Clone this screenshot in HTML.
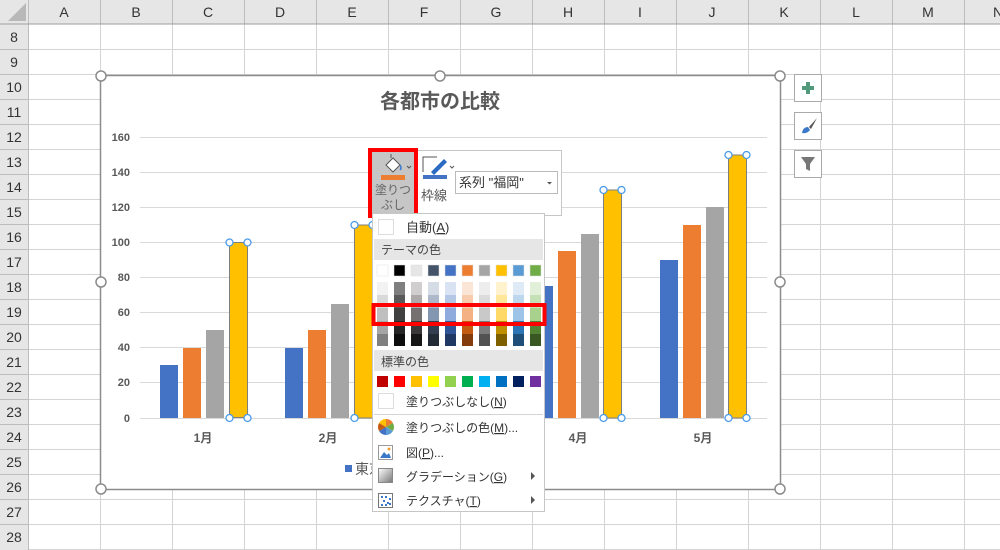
<!DOCTYPE html>
<html><head><meta charset="utf-8"><style>
body{margin:0;width:1000px;height:550px;overflow:hidden;background:#fff;font-family:"Liberation Sans","Noto Sans CJK JP",sans-serif;position:relative}
.a{position:absolute}
</style></head><body>
<svg class="a" style="left:0;top:0" width="1000" height="550" xmlns="http://www.w3.org/2000/svg" font-family="Liberation Sans, Noto Sans CJK JP, sans-serif">
<rect x="0" y="0" width="1000" height="24" fill="#e6e6e6"/>
<rect x="0" y="0" width="28" height="550" fill="#e6e6e6"/>
<path d="M26 3 L26 21 L8 21 Z" fill="#b8b8b8"/>
<g stroke="#d4d4d4" stroke-width="1">
<path d="M100.5 24V550M172.5 24V550M244.5 24V550M316.5 24V550M388.5 24V550M460.5 24V550M532.5 24V550M604.5 24V550M676.5 24V550M748.5 24V550M820.5 24V550M892.5 24V550M964.5 24V550"/>
<path d="M28 49.5H1000M28 74.5H1000M28 99.5H1000M28 124.5H1000M28 149.5H1000M28 174.5H1000M28 199.5H1000M28 224.5H1000M28 249.5H1000M28 274.5H1000M28 299.5H1000M28 324.5H1000M28 349.5H1000M28 374.5H1000M28 399.5H1000M28 424.5H1000M28 449.5H1000M28 474.5H1000M28 499.5H1000M28 524.5H1000M28 549.5H1000"/>
</g>
<g stroke="#bdbdbd"><path d="M100.5 0V24M172.5 0V24M244.5 0V24M316.5 0V24M388.5 0V24M460.5 0V24M532.5 0V24M604.5 0V24M676.5 0V24M748.5 0V24M820.5 0V24M892.5 0V24M964.5 0V24M28.5 0V550"/><path d="M0 49.5H28M0 74.5H28M0 99.5H28M0 124.5H28M0 149.5H28M0 174.5H28M0 199.5H28M0 224.5H28M0 249.5H28M0 274.5H28M0 299.5H28M0 324.5H28M0 349.5H28M0 374.5H28M0 399.5H28M0 424.5H28M0 449.5H28M0 474.5H28M0 499.5H28M0 524.5H28"/></g>
<line x1="0" y1="24" x2="1000" y2="24" stroke="#9e9e9e"/>
<g font-size="14" fill="#333" text-anchor="middle">
<text x="64" y="17">A</text><text x="136" y="17">B</text><text x="208" y="17">C</text><text x="280" y="17">D</text><text x="352" y="17">E</text><text x="424" y="17">F</text><text x="496" y="17">G</text><text x="568" y="17">H</text><text x="640" y="17">I</text><text x="712" y="17">J</text><text x="784" y="17">K</text><text x="856" y="17">L</text><text x="928" y="17">M</text><text x="998" y="17">N</text>
<text x="14" y="42">8</text><text x="14" y="67">9</text><text x="14" y="92">10</text><text x="14" y="117">11</text><text x="14" y="142">12</text><text x="14" y="167">13</text><text x="14" y="192">14</text><text x="14" y="217">15</text><text x="14" y="242">16</text><text x="14" y="267">17</text><text x="14" y="292">18</text><text x="14" y="317">19</text><text x="14" y="342">20</text><text x="14" y="367">21</text><text x="14" y="392">22</text><text x="14" y="417">23</text><text x="14" y="442">24</text><text x="14" y="467">25</text><text x="14" y="492">26</text><text x="14" y="517">27</text><text x="14" y="542">28</text>
</g>
<rect x="100.5" y="75.5" width="680" height="414" fill="#fff" stroke="#8c8c8c" stroke-width="1.5"/>
<text x="440" y="108" text-anchor="middle" font-size="20" font-weight="bold" fill="#595959">各都市の比較</text>
<g stroke="#d9d9d9"><path d="M140 137.5H767M140 172.5H767M140 207.5H767M140 242.5H767M140 277.5H767M140 312.5H767M140 347.5H767M140 382.5H767M140 418.5H767"/></g>
<g font-size="11" font-weight="bold" fill="#595959" text-anchor="end">
<text x="130" y="141">160</text><text x="130" y="176">140</text><text x="130" y="211">120</text><text x="130" y="246">100</text><text x="130" y="281">80</text><text x="130" y="316">60</text><text x="130" y="351">40</text><text x="130" y="386">20</text><text x="130" y="422">0</text>
</g>
<g font-size="12" font-weight="bold" fill="#595959" text-anchor="middle"><text x="203" y="442">1月</text><text x="328" y="442">2月</text><text x="578" y="442">4月</text><text x="703" y="442">5月</text></g>
<g>
<rect x="160" y="365" width="18" height="53" fill="#4472c4"/><rect x="183" y="348" width="18" height="70" fill="#ed7d31"/><rect x="206" y="330" width="18" height="88" fill="#a5a5a5"/>
<rect x="285" y="348" width="18" height="70" fill="#4472c4"/><rect x="308" y="330" width="18" height="88" fill="#ed7d31"/><rect x="331" y="304" width="18" height="114" fill="#a5a5a5"/>
<rect x="535" y="286" width="18" height="132" fill="#4472c4"/><rect x="558" y="251" width="18" height="167" fill="#ed7d31"/><rect x="581" y="234" width="18" height="184" fill="#a5a5a5"/>
<rect x="660" y="260" width="18" height="158" fill="#4472c4"/><rect x="683" y="225" width="18" height="193" fill="#ed7d31"/><rect x="706" y="207" width="18" height="211" fill="#a5a5a5"/>
</g>
<g fill="#ffc000" stroke="#7f7f7f"><rect x="229.5" y="242.5" width="18" height="175"/><rect x="354.5" y="225" width="18" height="193"/><rect x="603.5" y="190" width="18" height="228"/><rect x="728.5" y="155" width="18" height="263"/></g>
<g fill="#fff" stroke="#4a9ae8" stroke-width="1.3">
<circle cx="229.5" cy="242.5" r="3.5"/><circle cx="247.5" cy="242.5" r="3.5"/><circle cx="229.5" cy="418" r="3.5"/><circle cx="247.5" cy="418" r="3.5"/>
<circle cx="354.5" cy="225" r="3.5"/><circle cx="372.5" cy="225" r="3.5"/><circle cx="354.5" cy="418" r="3.5"/>
<circle cx="603.5" cy="190" r="3.5"/><circle cx="621.5" cy="190" r="3.5"/><circle cx="603.5" cy="418" r="3.5"/><circle cx="621.5" cy="418" r="3.5"/>
<circle cx="728.5" cy="155" r="3.5"/><circle cx="746.5" cy="155" r="3.5"/><circle cx="728.5" cy="418" r="3.5"/><circle cx="746.5" cy="418" r="3.5"/>
</g>
<rect x="345" y="465" width="7" height="7" fill="#4472c4"/>
<text x="355" y="474" font-size="14" fill="#595959">東京</text>
<g fill="#fff" stroke="#8c8c8c" stroke-width="1.5">
<circle cx="101" cy="76" r="5"/><circle cx="440" cy="76" r="5"/><circle cx="780" cy="76" r="5"/><circle cx="101" cy="282" r="5"/><circle cx="780" cy="282" r="5"/><circle cx="101" cy="489" r="5"/><circle cx="780" cy="489" r="5"/>
</g>
<g fill="#fff" stroke="#aaa"><rect x="794.5" y="74.5" width="27" height="27"/><rect x="794.5" y="112.5" width="27" height="27"/><rect x="794.5" y="150.5" width="27" height="27"/></g>
<path d="M806 82h4v4h4v4h-4v4h-4v-4h-4v-4h4z" fill="#4f9a7a"/>
<path d="M817 118 L809 127 L811 129 Z" fill="#555"/><path d="M802 133 Q803 127 808 127 L810 130 Q807 134 802 133Z" fill="#3b78c7"/>
<path d="M801 157h14l-5 7v7l-4 -2v-5z" fill="#777"/>
<rect x="368.5" y="150.5" width="193" height="65" fill="#fff" stroke="#c6c6c6"/>
<rect x="370" y="150" width="46" height="66" fill="#c6c6c6" stroke="#ff0000" stroke-width="4"/>
<path d="M386 165 L393 158 L400 165 L393 172 Z" fill="#fff" stroke="#555"/>
<path d="M391 158 V154" stroke="#555"/><path d="M400 165 q2 3 0 5" stroke="#3c7dd0" fill="none" stroke-width="1.5"/>
<path d="M407 166l2 2 2-2" stroke="#555" fill="none"/>
<rect x="381" y="175" width="24" height="5" fill="#ed7d31"/>
<text x="393" y="194" font-size="12" fill="#666" text-anchor="middle">塗りつ</text>
<text x="393" y="209" font-size="12" fill="#666" text-anchor="middle">ぶし</text>
<path d="M423 172 V157 H437" stroke="#555" fill="none"/>
<path d="M431 172 L444 159 L447 162 L434 175 Z" fill="#2b6ac2"/>
<path d="M450 166l2 2 2-2" stroke="#555" fill="none"/>
<rect x="423" y="175" width="24" height="4" fill="#4472c4"/>
<text x="421" y="200" font-size="13" fill="#555">枠線</text>
<rect x="455.5" y="171.5" width="102" height="22" fill="#fff" stroke="#bbb"/>
<text x="459" y="187" font-size="13" fill="#333">系列 "福岡"</text>
<path d="M547 182l2.5 2.5 2.5-2.5z" fill="#555"/>
<rect x="372.5" y="213.5" width="172" height="298" fill="#fff" stroke="#c6c6c6"/>
<rect x="378.5" y="219.5" width="15" height="15" fill="#fff" stroke="#ddd"/>
<text x="406" y="232" font-size="13" fill="#333">自動(<tspan text-decoration="underline">A</tspan>)</text>
<rect x="374" y="239" width="169" height="21" fill="#e6e6e6"/>
<text x="381" y="254" font-size="12" fill="#444">テーマの色</text>
<g stroke="#e0e0e0" stroke-width="0.5">
<rect x="377" y="265" width="11" height="11" fill="#ffffff"/><rect x="394" y="265" width="11" height="11" fill="#000000"/><rect x="411" y="265" width="11" height="11" fill="#e7e6e6"/><rect x="428" y="265" width="11" height="11" fill="#44546a"/><rect x="445" y="265" width="11" height="11" fill="#4472c4"/><rect x="462" y="265" width="11" height="11" fill="#ed7d31"/><rect x="479" y="265" width="11" height="11" fill="#a5a5a5"/><rect x="496" y="265" width="11" height="11" fill="#ffc000"/><rect x="513" y="265" width="11" height="11" fill="#5b9bd5"/><rect x="530" y="265" width="11" height="11" fill="#70ad47"/>
</g>
<g>
<rect x="377" y="282" width="11" height="13" fill="#f2f2f2"/><rect x="377" y="295" width="11" height="13" fill="#d9d9d9"/><rect x="377" y="308" width="11" height="13" fill="#bfbfbf"/><rect x="377" y="321" width="11" height="13" fill="#a6a6a6"/><rect x="377" y="334" width="11" height="12" fill="#808080"/>
<rect x="394" y="282" width="11" height="13" fill="#7f7f7f"/><rect x="394" y="295" width="11" height="13" fill="#595959"/><rect x="394" y="308" width="11" height="13" fill="#404040"/><rect x="394" y="321" width="11" height="13" fill="#262626"/><rect x="394" y="334" width="11" height="12" fill="#0d0d0d"/>
<rect x="411" y="282" width="11" height="13" fill="#d0cece"/><rect x="411" y="295" width="11" height="13" fill="#aeaaaa"/><rect x="411" y="308" width="11" height="13" fill="#757171"/><rect x="411" y="321" width="11" height="13" fill="#3a3838"/><rect x="411" y="334" width="11" height="12" fill="#161616"/>
<rect x="428" y="282" width="11" height="13" fill="#d6dce5"/><rect x="428" y="295" width="11" height="13" fill="#adb9ca"/><rect x="428" y="308" width="11" height="13" fill="#8497b0"/><rect x="428" y="321" width="11" height="13" fill="#333f50"/><rect x="428" y="334" width="11" height="12" fill="#222a35"/>
<rect x="445" y="282" width="11" height="13" fill="#dae3f3"/><rect x="445" y="295" width="11" height="13" fill="#b4c7e7"/><rect x="445" y="308" width="11" height="13" fill="#8faadc"/><rect x="445" y="321" width="11" height="13" fill="#2f5597"/><rect x="445" y="334" width="11" height="12" fill="#203864"/>
<rect x="462" y="282" width="11" height="13" fill="#fbe5d6"/><rect x="462" y="295" width="11" height="13" fill="#f8cbad"/><rect x="462" y="308" width="11" height="13" fill="#f4b183"/><rect x="462" y="321" width="11" height="13" fill="#c55a11"/><rect x="462" y="334" width="11" height="12" fill="#843c0c"/>
<rect x="479" y="282" width="11" height="13" fill="#ededed"/><rect x="479" y="295" width="11" height="13" fill="#dbdbdb"/><rect x="479" y="308" width="11" height="13" fill="#c9c9c9"/><rect x="479" y="321" width="11" height="13" fill="#7b7b7b"/><rect x="479" y="334" width="11" height="12" fill="#525252"/>
<rect x="496" y="282" width="11" height="13" fill="#fff2cc"/><rect x="496" y="295" width="11" height="13" fill="#ffe699"/><rect x="496" y="308" width="11" height="13" fill="#ffd966"/><rect x="496" y="321" width="11" height="13" fill="#bf9000"/><rect x="496" y="334" width="11" height="12" fill="#7f6000"/>
<rect x="513" y="282" width="11" height="13" fill="#deebf7"/><rect x="513" y="295" width="11" height="13" fill="#bdd7ee"/><rect x="513" y="308" width="11" height="13" fill="#9dc3e6"/><rect x="513" y="321" width="11" height="13" fill="#2e75b6"/><rect x="513" y="334" width="11" height="12" fill="#1f4e79"/>
<rect x="530" y="282" width="11" height="13" fill="#e2f0d9"/><rect x="530" y="295" width="11" height="13" fill="#c5e0b4"/><rect x="530" y="308" width="11" height="13" fill="#a9d18e"/><rect x="530" y="321" width="11" height="13" fill="#548235"/><rect x="530" y="334" width="11" height="12" fill="#385723"/>
</g>
<rect x="373.5" y="305" width="171" height="19" fill="none" stroke="#ff0000" stroke-width="4"/>
<rect x="374" y="350" width="169" height="21" fill="#e6e6e6"/>
<text x="381" y="366" font-size="12" fill="#444">標準の色</text>
<g>
<rect x="377" y="376" width="11" height="11" fill="#c00000"/><rect x="394" y="376" width="11" height="11" fill="#ff0000"/><rect x="411" y="376" width="11" height="11" fill="#ffc000"/><rect x="428" y="376" width="11" height="11" fill="#ffff00"/><rect x="445" y="376" width="11" height="11" fill="#92d050"/><rect x="462" y="376" width="11" height="11" fill="#00b050"/><rect x="479" y="376" width="11" height="11" fill="#00b0f0"/><rect x="496" y="376" width="11" height="11" fill="#0070c0"/><rect x="513" y="376" width="11" height="11" fill="#002060"/><rect x="530" y="376" width="11" height="11" fill="#7030a0"/>
</g>
<rect x="378.5" y="393.5" width="15" height="15" fill="#fff" stroke="#ddd"/>
<text x="406" y="406" font-size="12" fill="#333">塗りつぶしなし(<tspan text-decoration="underline">N</tspan>)</text>
<line x1="374" y1="414.5" x2="543" y2="414.5" stroke="#d4d4d4"/>
<g transform="translate(386,427)">
<path d="M0 0 L0 -8 A8 8 0 0 1 6.9 -4 Z" fill="#ed7d31"/><path d="M0 0 L6.9 -4 A8 8 0 0 1 6.9 4 Z" fill="#70ad47"/><path d="M0 0 L6.9 4 A8 8 0 0 1 0 8 Z" fill="#5b9bd5"/><path d="M0 0 L0 8 A8 8 0 0 1 -6.9 4 Z" fill="#4472c4"/><path d="M0 0 L-6.9 4 A8 8 0 0 1 -6.9 -4 Z" fill="#c55a11"/><path d="M0 0 L-6.9 -4 A8 8 0 0 1 0 -8 Z" fill="#ffc000"/>
</g>
<text x="406" y="432" font-size="12" fill="#333">塗りつぶしの色(<tspan text-decoration="underline">M</tspan>)...</text>
<rect x="378.5" y="445.5" width="14" height="14" fill="#fff" stroke="#999"/><path d="M380 458 L384 452 L387 455 L389 453 L391 458Z" fill="#3b78c7"/><circle cx="389" cy="449" r="1.5" fill="#f0a030"/>
<text x="406" y="457" font-size="12" fill="#333">図(<tspan text-decoration="underline">P</tspan>)...</text>
<defs><linearGradient id="g" x1="0" y1="0" x2="1" y2="1"><stop offset="0" stop-color="#fff"/><stop offset="1" stop-color="#777"/></linearGradient></defs>
<rect x="378.5" y="468.5" width="14" height="14" fill="url(#g)" stroke="#888"/>
<text x="406" y="481" font-size="12" fill="#333">グラデーション(<tspan text-decoration="underline">G</tspan>)</text>
<path d="M531 472 L535 476 L531 480Z" fill="#555"/>
<rect x="378.5" y="493.5" width="14" height="14" fill="#fff" stroke="#777"/>
<g fill="#3b78c7"><rect x="381" y="496" width="2" height="2"/><rect x="385" y="496" width="2" height="2"/><rect x="389" y="498" width="2" height="2"/><rect x="383" y="500" width="2" height="2"/><rect x="387" y="502" width="2" height="2"/><rect x="381" y="504" width="2" height="2"/><rect x="385" y="504" width="2" height="2"/><rect x="389" y="503" width="2" height="2"/></g>
<text x="406" y="505" font-size="12" fill="#333">テクスチャ(<tspan text-decoration="underline">T</tspan>)</text>
<path d="M531 496 L535 500 L531 504Z" fill="#555"/>
</svg>
</body></html>
